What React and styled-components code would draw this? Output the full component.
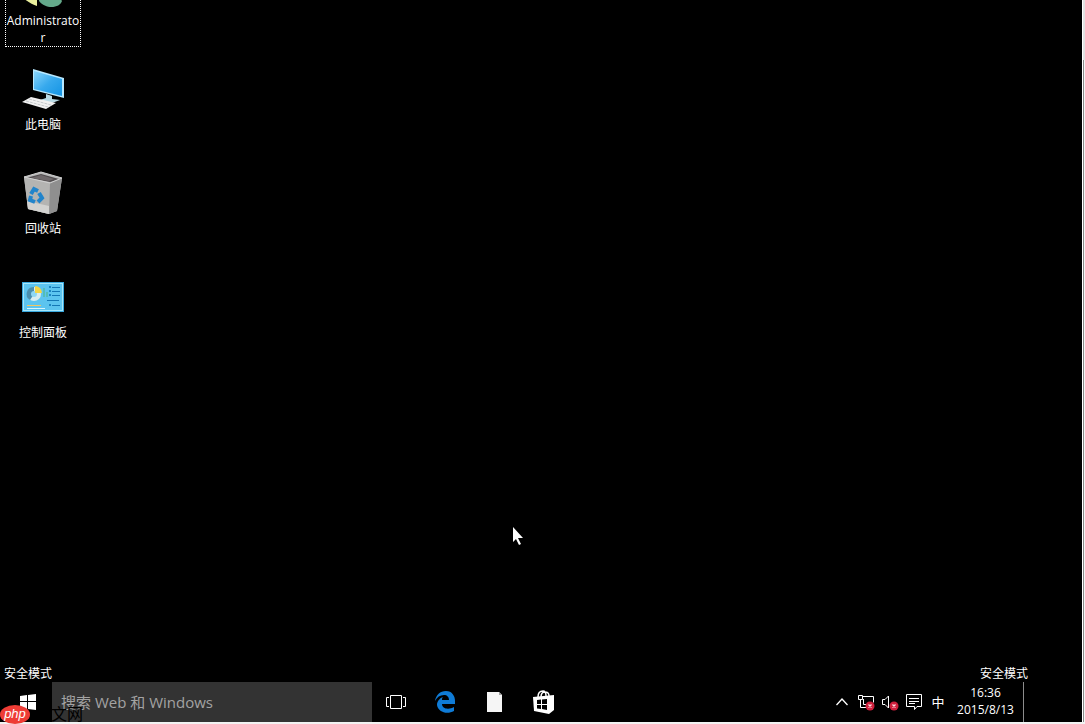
import React from "react";
import styled, { createGlobalStyle } from "styled-components";

const Global = createGlobalStyle`
  * { box-sizing: border-box; }
  body { margin: 0; background: #f2f2f2; overflow: hidden; }
  button, input { font: inherit; color: inherit; }
`;

const Page = styled.div`
  position: relative;
  display: grid;
  grid-template-columns: minmax(0, 1fr) 3px;
  grid-template-rows: minmax(0, 1fr) 2px;
  height: 100vh;
  overflow: hidden;
  background: #f2f2f2;
  color: #fff;
  font-family: "Open Sans", "Noto Sans CJK SC", sans-serif;
  font-size: 12px;
  line-height: 17px;
`;

const Screen = styled.main`
  display: flex;
  flex-direction: column;
  min-height: 0;
  background: #000;
`;

const ScrollTrack = styled.div`
  padding-top: 60px;
  border-left: 1px solid #fff;
  background: #e2e2e2;
`;

const ScrollThumb = styled.div`
  height: 100%;
  border-left: 1px solid #8a8a8a;
  background: #f4f4f4;
`;

const Desktop = styled.nav`
  flex: 1;
  min-height: 0;
  display: flex;
  flex-direction: column;
  align-items: flex-start;
  gap: 18px;
  padding-left: 5px;
  margin-top: -39px;
`;

const Shortcut = styled.button`
  display: flex;
  flex-direction: column;
  align-items: center;
  gap: 2px;
  width: 76px;
  height: 86px;
  padding: 0;
  border: 1px ${(p) => (p.$focused ? "dotted #fff" : "solid transparent")};
  background: none;
  text-align: center;

  svg { flex: none; display: block; }
`;

const ShortcutLabel = styled.span`
  width: 100%;
  word-break: break-all;
`;

const SafeModeRow = styled.div`
  display: flex;
  justify-content: space-between;
  height: 18px;
  padding: 1px 54px 0 4px;
`;

const Taskbar = styled.footer`
  display: flex;
  align-items: stretch;
  height: 40px;
`;

const StartButton = styled.button`
  display: flex;
  align-items: center;
  justify-content: center;
  width: 52px;
  padding: 0 0 0 4px;
  border: 0;
  background: none;
`;

const SearchBox = styled.input`
  width: 320px;
  padding: 0 9px;
  border: 0;
  border-radius: 0;
  outline: 0;
  background: #333;
  font-size: 15px;

  &::placeholder { color: #a3a3a3; opacity: 1; }
`;

const AppButton = styled.button`
  display: flex;
  align-items: center;
  justify-content: center;
  width: 49px;
  padding: 0;
  border: 0;
  background: none;
`;

const Tray = styled.div`
  display: flex;
  align-items: center;
  margin-left: auto;
  margin-right: 58px;
  border-right: 1px solid #8c8c8c;
`;

const TrayButton = styled.button`
  display: flex;
  align-items: center;
  justify-content: center;
  width: 24px;
  height: 40px;
  padding: 0;
  border: 0;
  background: none;
  font-size: 13px;
`;

const Clock = styled.button`
  width: 73px;
  padding: 0 2px 2px 0;
  border: 0;
  background: none;
  text-align: center;
  white-space: nowrap;
  line-height: 17px;
`;

const Pointer = styled.svg`
  position: absolute;
  left: 512px;
  top: 527px;
`;

const Watermark = styled.div`
  position: absolute;
  left: 0;
  bottom: 0;
  display: flex;
  align-items: center;
  gap: 5px;
  color: #000;
  font-size: 16px;
  line-height: 19px;
  pointer-events: none;
`;

const WatermarkBadge = styled.span`
  width: 30px;
  height: 19px;
  border-radius: 50%;
  background: #ee3c35;
  color: #fff;
  font-family: "Liberation Sans", sans-serif;
  font-size: 13px;
  font-style: italic;
  line-height: 17px;
  text-align: center;
`;

const UserIcon = () => (
  <svg width="48" height="48" viewBox="0 0 48 48" aria-hidden="true">
    <path d="M5 37 18 30 18 44 C14 43 10 40 5 37Z" fill="#e9ee9c" />
    <path d="M20 35 C27 31 39 32 43 39 C41 46 27 48 20 39Z" fill="#64a98a" />
    <circle cx="31" cy="18" r="9" fill="#64a98a" />
  </svg>
);

const ComputerIcon = () => (
  <svg width="48" height="48" viewBox="0 0 48 48" aria-hidden="true">
    <defs>
      <linearGradient id="glass" x1="0" y1="0" x2="1" y2="1">
        <stop offset="0" stopColor="#8ad5fb" />
        <stop offset=".5" stopColor="#37a9ed" />
        <stop offset="1" stopColor="#1494e4" />
      </linearGradient>
    </defs>
    <path d="M14 3 45 12V32L14 24Z" fill="#b7e8ff" />
    <path d="M15 5 43 13V30L15 23Z" fill="url(#glass)" />
    <path d="m27 28 6 2v3l8 1-8 3-12-3 6-2Z" fill="#b9dbe6" />
    <path d="m12 31 25 6-10 6L3 36Z" fill="#f1f1f1" />
    <path d="m10 33 22 6m-25-4 22 6" stroke="#c4c8ca" strokeWidth="1" strokeDasharray="3 1" />
  </svg>
);

const BinIcon = () => (
  <svg width="48" height="48" viewBox="0 0 48 48" aria-hidden="true">
    <path d="M5 7 22 2 43 8 38 41 30 44 9 39Z" fill="#b8b8b8" />
    <path d="M7 8 22 4 40 9 31 13Z" fill="#504c4e" />
    <path d="m12 8 10-3 13 4-5 2Z" fill="#6f696b" />
    <path d="M5 7 31 12 30 44 9 39Z" fill="#b4b4b2" />
    <path d="m8 31 22 5v8L9 39Z" fill="#d2d2d0" />
    <path d="m31 12 12-4-5 33-8 3Z" fill="#8f8f8f" />
    <path d="m5 7 17-5 21 6-12 5Z" fill="none" stroke="#d0d0d0" />
    <g fill="none" stroke="#2184cb" strokeWidth="4">
      <path d="m12 24 3-5 4 2" /><path d="m20 23 3 5-4 4" /><path d="m16 32-5-2 1-4" />
    </g>
  </svg>
);

const PanelIcon = () => (
  <svg width="48" height="48" viewBox="0 0 48 48" aria-hidden="true">
    <path d="M3 8H45V38H3Z" fill="#3aa9df" />
    <path d="M4 9H44V37H4Z" fill="#a5e6fa" />
    <path d="M5 10H43V36H5Z" fill="#5cc4ef" />
    <circle cx="15" cy="20" r="7" fill="#d7edf0" />
    <path d="M15 20V13A7 7 0 0 0 11 26Z" fill="#4b8fae" />
    <circle cx="15" cy="20" r="3" fill="#8ed8f3" />
    <path d="M16 19V12A7 7 0 0 1 23 19Z" fill="#f3d545" />
    <path d="M25 14v9m3-5v5" stroke="#4bb681" strokeWidth="1" />
    <path d="M33 13.500h8M33 17.500h8M33 21.500h8M28 26.500h12M33 31.500h8" stroke="#1477b5" />
    <path d="M30 12h2v2h-2zm0 4h2v2h-2zm0 4h2v2h-2zm0 10h2v2h-2z" fill="#1c86c2" />
    <path d="M8 31.500h14" stroke="#f2c762" />
    <path d="M8 34.500h18" stroke="#d6f5ff" />
  </svg>
);

const WindowsIcon = () => (
  <svg width="16" height="16" viewBox="0 0 16 16" fill="#fff" aria-hidden="true">
    <path d="M0 2 7 1v6H0ZM8 1l8-1v7H8ZM0 8h7v7l-7-1Zm8 0h8v8l-8-1Z" />
  </svg>
);

const TaskViewIcon = () => (
  <svg width="21" height="16" viewBox="0 0 21 16" fill="none" stroke="#fff" aria-hidden="true">
    <path d="M4.5 1.5h11v13h-11zM3 3.5H.5v9H3m14-9h2.500v9H17" />
  </svg>
);

const EdgeIcon = () => (
  <svg width="21" height="22" viewBox="0 0 21 22" aria-hidden="true">
    <path d="M0 10C1 4 5 0 11 0c6 0 9 5 9 10v3H7c0 5 7 6 12 3v4C12 24 3 21 2 14c0-4 3-7 6-8-1 1-1 2-1 3h7c0-3-2-5-5-5-4 0-7 2-9 6Z" fill="#0f7bd6" />
  </svg>
);

const FileIcon = () => (
  <svg width="15" height="20" viewBox="0 0 15 20" aria-hidden="true">
    <path d="M0 0h12l3 3v17H0Z" fill="#f5f5f5" />
    <path d="M12 0v3h3Z" fill="#a0a0a0" />
  </svg>
);

const StoreIcon = () => (
  <svg width="21" height="24" viewBox="0 0 21 24" aria-hidden="true">
    <path d="M5 7C5 3 7 1 10 1c2 0 3 2 3 5m-5 1c0-4 2-5 4-5s4 1 4 4" fill="none" stroke="#fff" strokeWidth="1.500" />
    <path d="m0 7 21-2v15l-5 4-15-3Z" fill="#fff" />
    <path d="m4 10 4-.500V14H4Zm5-.500 5-.500v5H9ZM4 15h4v4l-4-.500Zm5 0h5v5l-5-1Z" fill="#000" />
  </svg>
);

const Cross = () => (
  <g>
    <circle cx="13" cy="12" r="4.500" fill="#cf1f3c" stroke="none" />
    <path d="m11.500 10.500 3 3m0-3-3 3" stroke="#ffdbe1" strokeWidth="1.300" />
  </g>
);

const ChevronIcon = () => (
  <svg width="12" height="8" viewBox="0 0 12 8" fill="none" stroke="#fff" strokeWidth="1.300" aria-hidden="true">
    <path d="m.500 7 5.500-6 5.500 6" />
  </svg>
);

const NetworkIcon = () => (
  <svg width="18" height="17" viewBox="0 0 18 17" fill="none" stroke="#fff" aria-hidden="true">
    <path d="M1.500 1.500h4v4h-4zM6 2.500h10.500v6M3.500 6v7.500H9M6.500 5v5.500H9" />
    <Cross />
  </svg>
);

const SpeakerIcon = () => (
  <svg width="18" height="17" viewBox="0 0 18 17" fill="none" stroke="#fff" aria-hidden="true">
    <path d="M1.500 5.500H4l3.500-3.500v12L4 10.500H1.500Z" />
    <Cross />
  </svg>
);

const MessageIcon = () => (
  <svg width="16" height="17" viewBox="0 0 16 17" fill="none" stroke="#fff" aria-hidden="true">
    <path d="M.500.500h15v12H11L8.500 15.500V12.500H.500ZM3 4.500h10M3 7.500h10M3 9.500h6" />
  </svg>
);

const shortcuts = [
  { label: "Administrator", Icon: UserIcon, focused: true },
  { label: "此电脑", Icon: ComputerIcon },
  { label: "回收站", Icon: BinIcon },
  { label: "控制面板", Icon: PanelIcon },
];

const apps = [
  { label: "任务视图", Icon: TaskViewIcon },
  { label: "Microsoft Edge", Icon: EdgeIcon },
  { label: "文件", Icon: FileIcon },
  { label: "应用商店", Icon: StoreIcon },
];

export default function App() {
  return (
    <>
      <Global />
      <Page>
        <Screen>
          <Desktop>
            {shortcuts.map(({ label, Icon, focused }) => (
              <Shortcut key={label} type="button" $focused={focused}>
                <Icon />
                <ShortcutLabel>{label}</ShortcutLabel>
              </Shortcut>
            ))}
          </Desktop>
          <SafeModeRow>
            <span>安全模式</span>
            <span>安全模式</span>
          </SafeModeRow>
          <Taskbar>
            <StartButton type="button" aria-label="开始"><WindowsIcon /></StartButton>
            <SearchBox type="text" aria-label="搜索" placeholder="搜索 Web 和 Windows" />
            {apps.map(({ label, Icon }) => (
              <AppButton key={label} type="button" aria-label={label}><Icon /></AppButton>
            ))}
            <Tray>
              <TrayButton type="button" aria-label="显示隐藏的图标"><ChevronIcon /></TrayButton>
              <TrayButton type="button" aria-label="网络"><NetworkIcon /></TrayButton>
              <TrayButton type="button" aria-label="音量"><SpeakerIcon /></TrayButton>
              <TrayButton type="button" aria-label="通知"><MessageIcon /></TrayButton>
              <TrayButton type="button">中</TrayButton>
              <Clock type="button">16:36<br />2015/8/13</Clock>
            </Tray>
          </Taskbar>
        </Screen>
        <ScrollTrack><ScrollThumb /></ScrollTrack>
        <Pointer width="12" height="19" viewBox="0 0 12 19" aria-hidden="true">
          <path d="M1 0v15l3-3 3 6 2-1-3-6h5Z" fill="#fff" />
        </Pointer>
        <Watermark>
          <WatermarkBadge>php</WatermarkBadge>
          <span>中文网</span>
        </Watermark>
      </Page>
    </>
  );
}
